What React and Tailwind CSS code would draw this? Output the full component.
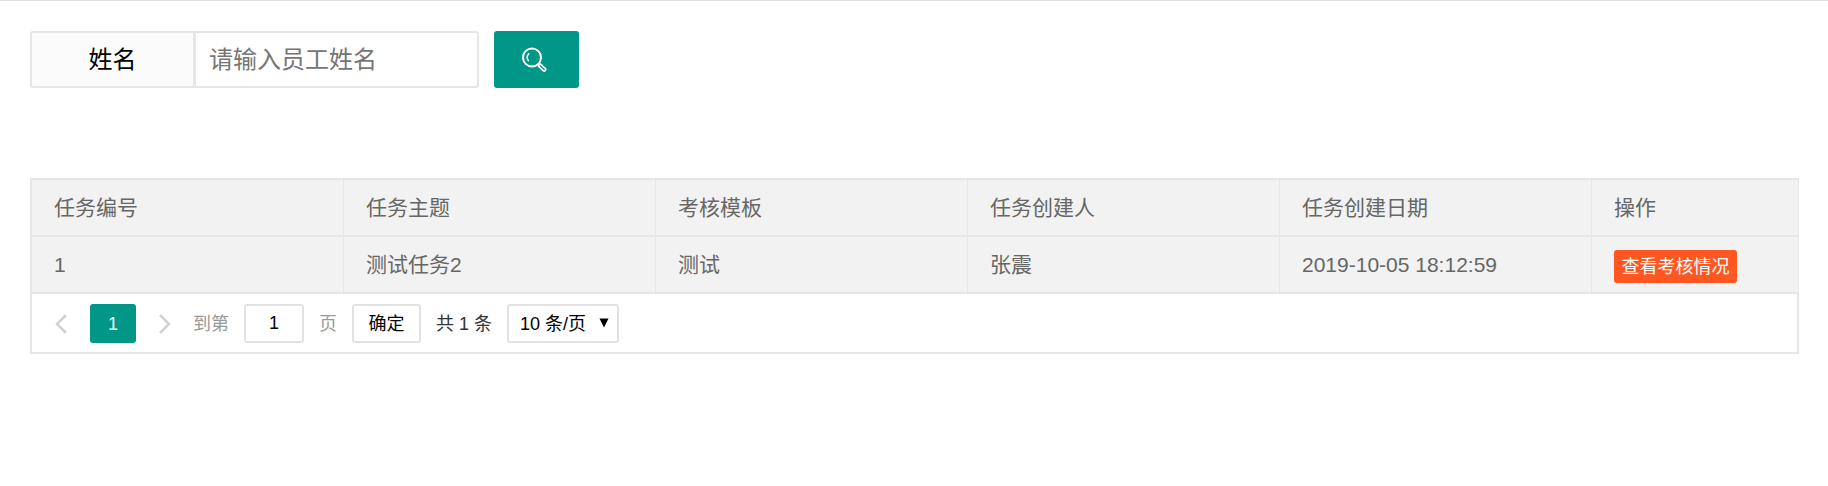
import React from "react";

const columns = ["任务编号", "任务主题", "考核模板", "任务创建人", "任务创建日期"];

const rows = [["1", "测试任务2", "测试", "张震", "2019-10-05 18:12:59"]];

function SearchIcon() {
  return (
    <svg viewBox="0 0 26 26" className="h-[26px] w-[26px]" fill="none" stroke="currentColor" aria-hidden="true">
      <circle cx="11" cy="10.5" r="9" strokeWidth="2" />
      <path d="M7.8 6.8 C5.9 8.8 5.9 11.8 7.4 13.8" strokeWidth="1.5" strokeLinecap="round" />
      <path
        d="M17.2 18.9 L19.3 16.9 L24.2 21.4 C25.5 22.8 23.7 24.9 22.2 23.7 Z"
        strokeWidth="1.6"
        strokeLinejoin="round"
      />
    </svg>
  );
}

function Chevron({ d }) {
  return (
    <svg viewBox="0 0 12 20" className="h-5 w-3" fill="none" stroke="currentColor" strokeWidth="2.5" aria-hidden="true">
      <path d={d} />
    </svg>
  );
}

function SearchBar() {
  return (
    <form className="flex items-stretch" onSubmit={(e) => e.preventDefault()}>
      <label
        htmlFor="name"
        className="flex h-[57px] w-[165px] items-center justify-center rounded-l-[3px] border-2 border-[#e6e6e6] bg-[#fbfbfb] text-2xl text-black"
      >
        姓名
      </label>
      <input
        id="name"
        type="text"
        placeholder="请输入员工姓名"
        className="-ml-px h-[57px] w-[285px] rounded-r-[3px] border-2 border-[#e6e6e6] bg-white px-[13px] text-2xl text-black outline-none placeholder:text-[#757575]"
      />
      <button
        type="submit"
        aria-label="搜索"
        className="ml-[15px] flex h-[57px] w-[85px] items-center justify-center rounded-[3px] bg-[#009688] pr-1.5 text-white"
      >
        <SearchIcon />
      </button>
    </form>
  );
}

function Pagination() {
  return (
    <nav className="flex items-center border-r border-[#e6e6e6] pt-2.5 pb-[9px] pl-[23px] text-lg text-[#999]">
      <button type="button" aria-label="上一页" className="flex h-[39px] w-[35px] items-center text-[#d2d2d2]">
        <Chevron d="M11 1 L2 10 L11 19" />
      </button>
      <button type="button" className="h-[39px] w-[46px] rounded-[3px] bg-[#009688] text-white">
        1
      </button>
      <button type="button" aria-label="下一页" className="flex h-[39px] w-[35px] items-center justify-end text-[#d2d2d2]">
        <Chevron d="M1 1 L10 10 L1 19" />
      </button>
      <label htmlFor="page" className="ml-[22px]">
        到第
      </label>
      <input
        id="page"
        type="text"
        defaultValue="1"
        className="mx-[15px] h-[39px] w-[60px] rounded-[3px] border-2 border-[#e2e2e2] bg-white text-center text-black outline-none"
      />
      <span>页</span>
      <button
        type="button"
        className="ml-[15px] h-[39px] w-[69px] rounded-[3px] border-2 border-[#e2e2e2] bg-white text-black"
      >
        确定
      </button>
      <span className="mx-[15px] text-[#333]">共 1 条</span>
      <span className="relative">
        <select
          aria-label="每页条数"
          className="block h-[39px] w-28 appearance-none rounded-[3px] border-2 border-[#e2e2e2] bg-white pl-[11px] text-black outline-none"
        >
          <option>10 条/页</option>
          <option>20 条/页</option>
          <option>30 条/页</option>
        </select>
        <svg
          viewBox="0 0 10 10"
          className="pointer-events-none absolute top-3.5 right-2.5 h-2.5 w-2.5"
          aria-hidden="true"
        >
          <path d="M0.5 0.5 H9.5 L5 9.5 Z" fill="#000" />
        </svg>
      </span>
    </nav>
  );
}

export default function App() {
  return (
    <main className="border-t border-[#e2e2e2] bg-white px-[30px] pt-[30px] pr-[29px] font-['Liberation_Sans','Noto_Sans_CJK_SC',sans-serif]">
      <SearchBar />
      <div className="mt-[90px] border-2 border-r border-[#e6e6e6]">
        <table className="w-full table-fixed border-separate border-spacing-0 bg-[#f2f2f2] text-left text-[21px] leading-8 text-[#666]">
          <thead>
            <tr>
              {columns.map((c) => (
                <th
                  key={c}
                  scope="col"
                  className="h-[57px] w-[312px] border-r border-b-2 border-[#e6e6e6] px-[22px] font-normal"
                >
                  {c}
                </th>
              ))}
              <th scope="col" className="h-[57px] border-b-2 border-[#e6e6e6] px-[22px] font-normal">
                操作
              </th>
            </tr>
          </thead>
          <tbody>
            {rows.map((row) => (
              <tr key={row[0]}>
                {row.map((cell, i) => (
                  <td key={i} className="h-[57px] border-r border-b-2 border-[#e6e6e6] px-[22px]">
                    {cell}
                  </td>
                ))}
                <td className="h-[57px] border-b-2 border-[#e6e6e6] px-[22px]">
                  <a
                    href="#detail"
                    className="mt-1 flex h-[33px] w-[123px] items-center justify-center rounded-[3px] bg-[#ff5722] text-lg leading-8 whitespace-nowrap text-white"
                  >
                    查看考核情况
                  </a>
                </td>
              </tr>
            ))}
          </tbody>
        </table>
        <Pagination />
      </div>
    </main>
  );
}
